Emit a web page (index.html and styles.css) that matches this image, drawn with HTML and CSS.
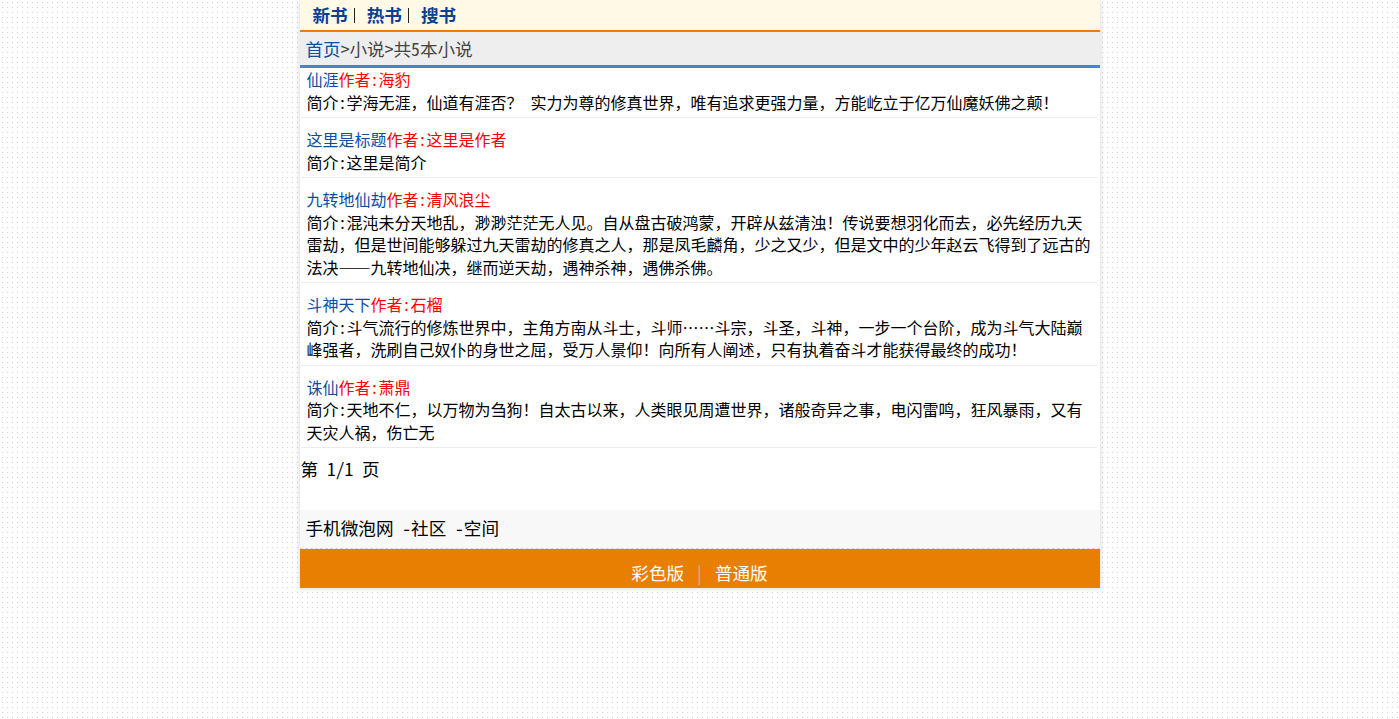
FILE: index.html
```html
<!DOCTYPE html>
<html lang="zh-CN">
<head>
<meta charset="utf-8">
<title>小说列表</title>
<link rel="stylesheet" href="styles.css">
</head>
<body>
<div class="page">
  <div class="topnav">
    <a class="nav-link" href="#">新书</a><span class="bar"></span>
    <a class="nav-link" href="#">热书</a><span class="bar"></span>
    <a class="nav-link" href="#">搜书</a>
  </div>
  <div class="crumb"><a class="crumb-link" href="#">首页</a>&gt;小说&gt;共5本小说</div>
  <ul class="list">
    <li class="item">
      <div class="head"><a class="title" href="#">仙涯</a><span class="author">作者:海豹</span></div>
      <div class="intro">简介:学海无涯，仙道有涯否？ 实力为尊的修真世界，唯有追求更强力量，方能屹立于亿万仙魔妖佛之颠！</div>
    </li>
    <li class="item">
      <div class="head"><a class="title" href="#">这里是标题</a><span class="author">作者:这里是作者</span></div>
      <div class="intro">简介:这里是简介</div>
    </li>
    <li class="item">
      <div class="head"><a class="title" href="#">九转地仙劫</a><span class="author">作者:清风浪尘</span></div>
      <div class="intro">简介:混沌未分天地乱，渺渺茫茫无人见。自从盘古破鸿蒙，开辟从兹清浊！传说要想羽化而去，必先经历九天雷劫，但是世间能够躲过九天雷劫的修真之人，那是凤毛麟角，少之又少，但是文中的少年赵云飞得到了远古的法决——九转地仙决，继而逆天劫，遇神杀神，遇佛杀佛。</div>
    </li>
    <li class="item">
      <div class="head"><a class="title" href="#">斗神天下</a><span class="author">作者:石榴</span></div>
      <div class="intro">简介:斗气流行的修炼世界中，主角方南从斗士，斗师……斗宗，斗圣，斗神，一步一个台阶，成为斗气大陆巅峰强者，洗刷自己奴仆的身世之屈，受万人景仰！向所有人阐述，只有执着奋斗才能获得最终的成功！</div>
    </li>
    <li class="item">
      <div class="head"><a class="title" href="#">诛仙</a><span class="author">作者:萧鼎</span></div>
      <div class="intro">简介:天地不仁，以万物为刍狗！自太古以来，人类眼见周遭世界，诸般奇异之事，电闪雷鸣，狂风暴雨，又有天灾人祸，伤亡无</div>
    </li>
  </ul>
  <div class="pager">第 1/1 页</div>
  <div class="links">手机微泡网 -社区 -空间</div>
  <div class="footer">
    <a class="foot-link" href="#">彩色版</a><span class="sep">|</span><a class="foot-link" href="#">普通版</a>
  </div>
</div>
</body>
</html>
```

FILE: styles.css
```css
html, body {
  margin: 0;
  padding: 0;
}

body {
  font-family: "Noto Sans Mono CJK SC", "Noto Sans CJK SC", "Liberation Mono", monospace;
  font-size: 16px;
  color: #000;
  background-color: #fff;
  background-image:
    linear-gradient(#fff 2px, transparent 2px, transparent 3px, #fff 3px),
    linear-gradient(90deg, #fff 2px, #d2d2d2 2px, #d2d2d2 3px, #fff 3px);
  background-size: 5px 5px;
  min-height: 719px;
}

a {
  text-decoration: none;
}

.page {
  width: 800px;
  margin: 0 auto;
  background: #fff;
  box-shadow: 0 0 6px rgba(0, 0, 0, 0.18);
}

.topnav {
  height: 30px;
  background: #fff9e6;
  border-bottom: 2px solid #e97f02;
  display: flex;
  align-items: center;
  padding-left: 13px;
  font-size: 17.6px;
}

.nav-link {
  color: #0b3f94;
  font-weight: bold;
  line-height: 30px;
}

.bar {
  display: inline-block;
  width: 1px;
  height: 15px;
  background: #222;
  margin: 0 12px 0 6px;
}

.crumb {
  height: 33px;
  line-height: 33px;
  background: #eeeeee;
  border-bottom: 3px solid #4a86c2;
  padding-left: 6px;
  color: #444;
  font-size: 17.6px;
}

.crumb-link {
  color: #0c4da2;
}

.list {
  list-style: none;
  margin: 0;
  padding: 0 3px 0 1px;
}

.item {
  padding: 10px 6px 4px;
  border-bottom: 1px solid #ececec;
  line-height: 22.5px;
}

.item:first-child {
  padding-top: 0;
}

.title {
  color: #0c4da2;
}

.author {
  color: #ff0000;
}

.intro {
  color: #000;
}

.pager {
  margin-top: 9px;
  padding-left: 1px;
  font-size: 17.6px;
  line-height: 24px;
  padding-bottom: 29px;
}

.links {
  background: #f8f8f8;
  padding: 6px 6px 8px;
  font-size: 17.6px;
  line-height: 24px;
  border-bottom: 1px dashed #d6d6d6;
}

.footer {
  background: #e97f02;
  padding: 12px 0 3px;
  font-size: 17.6px;
  line-height: 24px;
  display: flex;
  justify-content: center;
  align-items: center;
}

.foot-link {
  color: #fff;
}

.sep {
  color: #b8b8b8;
  margin: 0 11px;
}
```
